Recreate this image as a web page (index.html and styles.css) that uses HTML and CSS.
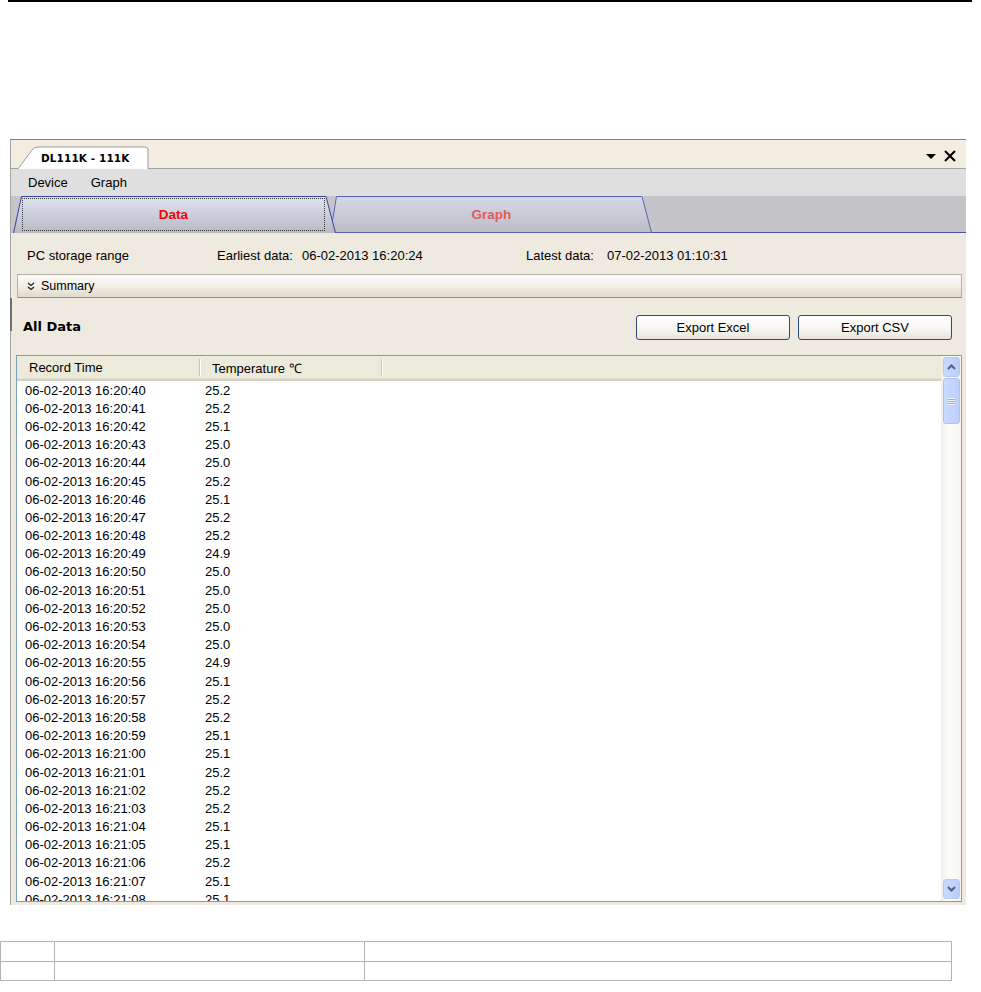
FILE: index.html
```html
<!DOCTYPE html>
<html>
<head>
<meta charset="utf-8">
<link rel="stylesheet" href="styles.css">
</head>
<body>
<div class="topline"></div>
<div class="window">
  <div class="docstrip">
    <div class="doctab">
      <svg class="doctab-bg" width="132" height="23" viewBox="0 0 132 23"><path d="M1 23 L15 4 Q17 1 21 1 L128 1 Q131 1 131 4 L131 23" fill="#ffffff" stroke="#9c9c9c" stroke-width="1"/></svg>
      <span class="doctab-label">DL111K - 111K</span>
    </div>
    <div class="docstrip-fill"></div>
    <div class="doc-ctrls">
      <svg width="12" height="12" viewBox="0 0 12 12"><path d="M1 4 L11 4 L6 9 Z" fill="#000"/></svg>
      <svg width="14" height="14" viewBox="0 0 14 14"><path d="M2 2 L12 12 M12 2 L2 12" stroke="#000" stroke-width="2"/></svg>
    </div>
  </div>
  <div class="menubar">
    <span class="menu-item">Device</span>
    <span class="menu-item">Graph</span>
  </div>
  <div class="tabrow">
    <div class="tab tab-active">
      <svg class="tab-bg" width="323" height="37" viewBox="0 0 323 37">
        <defs><linearGradient id="ga" x1="0" y1="0" x2="0" y2="1"><stop offset="0" stop-color="#dde4f1"/><stop offset="1" stop-color="#b9b9c3"/></linearGradient></defs>
        <path d="M0.5 37 L8.5 0.5 L313 0.5 L322.5 37" fill="url(#ga)" stroke="#3543a3" stroke-width="1"/>
      </svg>
      <span class="tab-focus">Data</span>
    </div>
    <div class="tab tab-inactive">
      <svg class="tab-bg" width="323" height="37" viewBox="0 0 323 37">
        <defs><linearGradient id="gb" x1="0" y1="0" x2="0" y2="1"><stop offset="0" stop-color="#d5d9e6"/><stop offset="1" stop-color="#bdbcc5"/></linearGradient></defs>
        <path d="M0.5 36.5 L6.5 0.5 L312 0.5 L321.5 36.5 Z" fill="url(#gb)" stroke="#5a63b9" stroke-width="1"/>
      </svg>
      <span class="tab-label">Graph</span>
    </div>
    <div class="tabrow-fill"></div>
  </div>
  <div class="content">
    <div class="inforow">
      <span class="info-a">PC storage range</span>
      <span class="info-b">Earliest data:</span>
      <span class="info-c">06-02-2013 16:20:24</span>
      <span class="info-d">Latest data:</span>
      <span class="info-e">07-02-2013 01:10:31</span>
    </div>
    <div class="summary">
      <svg class="summary-chev" width="8" height="9" viewBox="0 0 8 9"><path d="M1 1 L4 3.5 L7 1 M1 5 L4 7.5 L7 5" fill="none" stroke="#222" stroke-width="1.3"/></svg>
      <span>Summary</span>
    </div>
    <div class="alldata-row">
      <span class="splitter-mark"></span>
      <span class="alldata-title">All Data</span>
      <div class="btns">
        <button class="btn">Export Excel</button>
        <button class="btn">Export CSV</button>
      </div>
    </div>
    <div class="grid">
      <div class="grid-main">
        <div class="grid-head">
          <div class="hcell hcell-1">Record Time</div>
          <div class="hsep"></div>
          <div class="hcell hcell-2">Temperature ℃</div>
          <div class="hsep"></div>
        </div>
        <div class="grid-body">
          <div class="row"><span class="c1">06-02-2013 16:20:40</span><span class="c2">25.2</span></div>
          <div class="row"><span class="c1">06-02-2013 16:20:41</span><span class="c2">25.2</span></div>
          <div class="row"><span class="c1">06-02-2013 16:20:42</span><span class="c2">25.1</span></div>
          <div class="row"><span class="c1">06-02-2013 16:20:43</span><span class="c2">25.0</span></div>
          <div class="row"><span class="c1">06-02-2013 16:20:44</span><span class="c2">25.0</span></div>
          <div class="row"><span class="c1">06-02-2013 16:20:45</span><span class="c2">25.2</span></div>
          <div class="row"><span class="c1">06-02-2013 16:20:46</span><span class="c2">25.1</span></div>
          <div class="row"><span class="c1">06-02-2013 16:20:47</span><span class="c2">25.2</span></div>
          <div class="row"><span class="c1">06-02-2013 16:20:48</span><span class="c2">25.2</span></div>
          <div class="row"><span class="c1">06-02-2013 16:20:49</span><span class="c2">24.9</span></div>
          <div class="row"><span class="c1">06-02-2013 16:20:50</span><span class="c2">25.0</span></div>
          <div class="row"><span class="c1">06-02-2013 16:20:51</span><span class="c2">25.0</span></div>
          <div class="row"><span class="c1">06-02-2013 16:20:52</span><span class="c2">25.0</span></div>
          <div class="row"><span class="c1">06-02-2013 16:20:53</span><span class="c2">25.0</span></div>
          <div class="row"><span class="c1">06-02-2013 16:20:54</span><span class="c2">25.0</span></div>
          <div class="row"><span class="c1">06-02-2013 16:20:55</span><span class="c2">24.9</span></div>
          <div class="row"><span class="c1">06-02-2013 16:20:56</span><span class="c2">25.1</span></div>
          <div class="row"><span class="c1">06-02-2013 16:20:57</span><span class="c2">25.2</span></div>
          <div class="row"><span class="c1">06-02-2013 16:20:58</span><span class="c2">25.2</span></div>
          <div class="row"><span class="c1">06-02-2013 16:20:59</span><span class="c2">25.1</span></div>
          <div class="row"><span class="c1">06-02-2013 16:21:00</span><span class="c2">25.1</span></div>
          <div class="row"><span class="c1">06-02-2013 16:21:01</span><span class="c2">25.2</span></div>
          <div class="row"><span class="c1">06-02-2013 16:21:02</span><span class="c2">25.2</span></div>
          <div class="row"><span class="c1">06-02-2013 16:21:03</span><span class="c2">25.2</span></div>
          <div class="row"><span class="c1">06-02-2013 16:21:04</span><span class="c2">25.1</span></div>
          <div class="row"><span class="c1">06-02-2013 16:21:05</span><span class="c2">25.1</span></div>
          <div class="row"><span class="c1">06-02-2013 16:21:06</span><span class="c2">25.2</span></div>
          <div class="row"><span class="c1">06-02-2013 16:21:07</span><span class="c2">25.1</span></div>
          <div class="row"><span class="c1">06-02-2013 16:21:08</span><span class="c2">25.1</span></div>
        </div>
      </div>
      <div class="vscroll">
        <div class="sb-btn">
          <svg width="9" height="6" viewBox="0 0 9 6"><path d="M1 5 L4.5 1.5 L8 5" fill="none" stroke="#4d6185" stroke-width="2"/></svg>
        </div>
        <div class="sb-thumb"><span class="grip"></span></div>
        <div class="sb-track"></div>
        <div class="sb-btn">
          <svg width="9" height="6" viewBox="0 0 9 6"><path d="M1 1 L4.5 4.5 L8 1" fill="none" stroke="#4d6185" stroke-width="2"/></svg>
        </div>
      </div>
    </div>
  </div>
</div>
<table class="foot">
  <tr><td class="f1"></td><td class="f2"></td><td class="f3"></td></tr>
  <tr><td class="f1"></td><td class="f2"></td><td class="f3"></td></tr>
</table>
</body>
</html>
```

FILE: styles.css
```css
* { box-sizing: border-box; }
html, body { margin: 0; padding: 0; background: #ffffff; }
body {
  font-family: "Liberation Sans", Arial, sans-serif;
  font-size: 13px;
  color: #000;
  width: 981px;
  height: 992px;
  overflow: hidden;
}
.topline {
  height: 2px;
  margin: 0 9px 0 8px;
  background: #000;
}
.window {
  margin-top: 137px;
  margin-left: 10px;
  width: 956px;
  height: 766px;
  border-top: 1px solid #7e7e7e;
  border-left: 1px solid #a6a6a6;
  display: flex;
  flex-direction: column;
}
.docstrip {
  height: 29px;
  background: #f3ede1;
  border-bottom: 1px solid #a2a2a2;
  display: flex;
  align-items: flex-end;
  flex: none;
}
.doctab {
  position: relative;
  width: 132px;
  height: 23px;
  margin-left: 6px;
  margin-bottom: -1px;
  display: flex;
  align-items: center;
}
.doctab-bg { position: absolute; left: 0; top: 0; }
.doctab-label {
  position: relative;
  padding-left: 24px;
  font-family: "DejaVu Sans", Verdana, sans-serif;
  font-weight: bold;
  font-size: 10.5px;
  letter-spacing: 0.1px;
}
.docstrip-fill { flex: 1; }
.doc-ctrls {
  align-self: center;
  display: flex;
  align-items: center;
  gap: 6px;
  padding-right: 9px;
  margin-top: 3px;
}
.doc-ctrls svg { display: block; }
.menubar {
  height: 27px;
  background: #dfdfdf;
  display: flex;
  align-items: center;
  padding-left: 17px;
  gap: 23px;
  flex: none;
}
.tabrow {
  height: 37px;
  background: #c5c4c9;
  display: flex;
  align-items: stretch;
  flex: none;
}
.tab {
  position: relative;
  width: 323px;
  height: 37px;
  display: flex;
  align-items: center;
  justify-content: center;
  font-weight: bold;
  font-size: 13.5px;
}
.tab-bg { position: absolute; left: 0; top: 0; }
.tab-active {
  margin-left: 2px;
  z-index: 2;
  justify-content: flex-start;
  padding-left: 9px;
}
.tab-focus {
  position: relative;
  width: 303px;
  height: 33px;
  border: 1px dotted #333;
  display: flex;
  align-items: center;
  justify-content: center;
  color: #ff0000;
}
.tab-inactive {
  margin-left: -6px;
  z-index: 1;
  color: #e05b5b;
}
.tab-label { position: relative; }
.tabrow-fill {
  flex: 1;
  margin-left: -2px;
  border-bottom: 1px solid #4452ab;
}
.content {
  flex: 1;
  background: #eeeadf;
  display: flex;
  flex-direction: column;
}
.inforow {
  height: 41px;
  padding-top: 4px;
  padding-left: 16px;
  display: flex;
  align-items: center;
  flex: none;
}
.info-a { width: 190px; }
.info-b { width: 85px; }
.info-c { width: 224px; }
.info-d { width: 81px; }
.summary {
  height: 24px;
  margin: 0 4px 0 6px;
  border: 1px solid #b4b1a2;
  border-bottom-color: #8f8d82;
  background: linear-gradient(#fcfbf8, #f1efe7 50%, #dedacb);
  display: flex;
  align-items: center;
  padding-left: 9px;
  gap: 6px;
  font-size: 12.5px;
  flex: none;
}
.summary-chev { display: block; }
.alldata-row {
  position: relative;
  height: 57px;
  display: flex;
  align-items: center;
  padding: 0 14px 0 12px;
  flex: none;
}
.splitter-mark {
  position: absolute;
  left: -1px;
  top: 0;
  width: 2px;
  height: 33px;
  background: #6f6f6f;
}
.alldata-title {
  font-family: "DejaVu Sans", Verdana, sans-serif;
  font-weight: bold;
  font-size: 13px;
  flex: 1;
}
.btns { display: flex; gap: 8px; margin-top: 1px; }
.btn {
  width: 154px;
  height: 25px;
  border: 1px solid #2b4a78;
  border-radius: 3px;
  background: linear-gradient(#ffffff, #f6f5f0 60%, #e6e3d8);
  font-family: "Liberation Sans", Arial, sans-serif;
  font-size: 13px;
  color: #000;
  padding: 0;
}
.grid {
  height: 547px;
  margin: 0 4px 0 5px;
  border: 1px solid #7f9db9;
  background: #ffffff;
  display: flex;
  flex: none;
}
.grid-main {
  flex: 1;
  overflow: hidden;
  display: flex;
  flex-direction: column;
}
.grid-head {
  height: 25px;
  background: #ebeadb;
  border-bottom: 2px solid #d6d2c2;
  box-shadow: inset 0 -1px 0 #e2decd;
  display: flex;
  align-items: center;
  flex: none;
}
.hcell { height: 100%; display: flex; align-items: center; }
.hcell-1 { width: 182px; padding-left: 12px; }
.hcell-2 { width: 180px; padding-left: 11px; }
.hsep {
  width: 2px;
  height: 17px;
  border-left: 1px solid #c8c5b3;
  border-right: 1px solid #ffffff;
}
.grid-body { flex: 1; overflow: hidden; }
.row {
  height: 18.2px;
  display: flex;
  align-items: center;
  white-space: nowrap;
}
.c1 { width: 182px; padding-left: 8px; }
.c2 { padding-left: 6px; }
.vscroll {
  width: 20px;
  display: flex;
  flex-direction: column;
  align-items: center;
  padding: 1px 0 2px 0;
  background: linear-gradient(to right, #f0eee6, #fdfdfa 40%, #f7f6f0);
  flex: none;
}
.sb-btn {
  width: 17px;
  height: 20px;
  border: 1px solid #b6c8f4;
  border-radius: 3px;
  background: linear-gradient(to right, #cad9fd, #bccffa);
  display: flex;
  align-items: center;
  justify-content: center;
  flex: none;
}
.sb-btn svg { display: block; }
.sb-thumb {
  width: 17px;
  height: 46px;
  margin-top: 1px;
  border: 1px solid #adc2f1;
  border-radius: 3px;
  background: linear-gradient(to right, #cbdaff, #bcd0fb);
  display: flex;
  align-items: center;
  justify-content: center;
  flex: none;
}
.grip {
  width: 7px;
  height: 7px;
  background: repeating-linear-gradient(#eef4ff 0 1px, #8eaef2 1px 2px);
}
.sb-track { flex: 1; }
.foot {
  margin-top: 36px;
  width: 952px;
  border-collapse: collapse;
}
.foot td {
  border: 1px solid #b4b4b4;
  padding: 0;
}
.foot tr:first-child td { height: 20px; }
.foot tr:last-child td { height: 19px; }
.f1 { width: 54px; }
.f2 { width: 310px; }
```
